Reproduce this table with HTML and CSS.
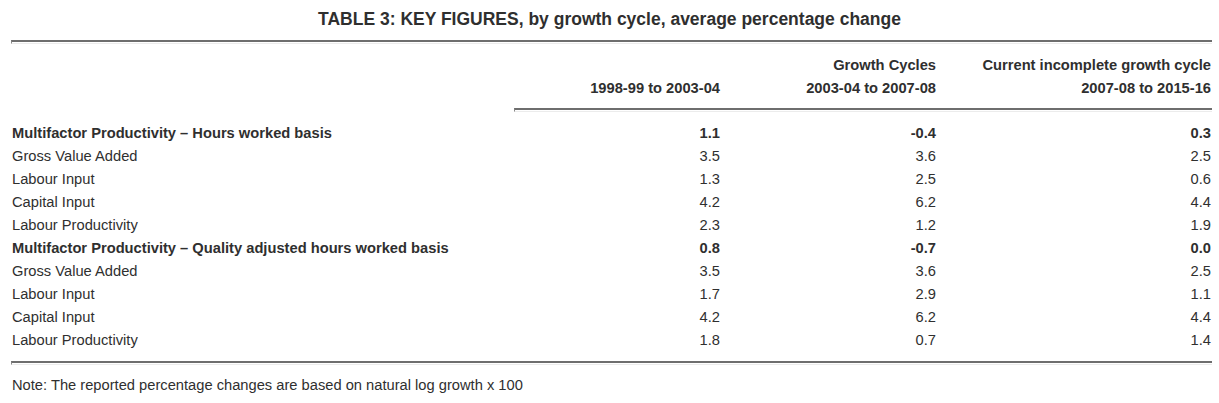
FILE: index.html
```html
<!DOCTYPE html>
<html>
<head>
<meta charset="utf-8">
<link rel="stylesheet" href="styles.css">
</head>
<body>
<div class="page">
  <h1 class="title">TABLE 3: KEY FIGURES, by growth cycle, average percentage change</h1>
  <div class="rule"></div>
  <div class="head">
    <div class="row">
      <div></div><div class="num"></div><div class="num">Growth Cycles</div><div class="num">Current incomplete growth cycle</div>
    </div>
    <div class="row">
      <div></div><div class="num">1998-99 to 2003-04</div><div class="num">2003-04 to 2007-08</div><div class="num">2007-08 to 2015-16</div>
    </div>
  </div>
  <div class="rule rule-sub"></div>
  <div class="body">
    <div class="row bold"><div>Multifactor Productivity – Hours worked basis</div><div class="num">1.1</div><div class="num">-0.4</div><div class="num">0.3</div></div>
    <div class="row"><div>Gross Value Added</div><div class="num">3.5</div><div class="num">3.6</div><div class="num">2.5</div></div>
    <div class="row"><div>Labour Input</div><div class="num">1.3</div><div class="num">2.5</div><div class="num">0.6</div></div>
    <div class="row"><div>Capital Input</div><div class="num">4.2</div><div class="num">6.2</div><div class="num">4.4</div></div>
    <div class="row"><div>Labour Productivity</div><div class="num">2.3</div><div class="num">1.2</div><div class="num">1.9</div></div>
    <div class="row bold"><div>Multifactor Productivity – Quality adjusted hours worked basis</div><div class="num">0.8</div><div class="num">-0.7</div><div class="num">0.0</div></div>
    <div class="row"><div>Gross Value Added</div><div class="num">3.5</div><div class="num">3.6</div><div class="num">2.5</div></div>
    <div class="row"><div>Labour Input</div><div class="num">1.7</div><div class="num">2.9</div><div class="num">1.1</div></div>
    <div class="row"><div>Capital Input</div><div class="num">4.2</div><div class="num">6.2</div><div class="num">4.4</div></div>
    <div class="row"><div>Labour Productivity</div><div class="num">1.8</div><div class="num">0.7</div><div class="num">1.4</div></div>
  </div>
  <div class="rule rule-bottom"></div>
  <p class="note">Note: The reported percentage changes are based on natural log growth x 100</p>
</div>
</body>
</html>
```
FILE: styles.css
```css
html, body {
  margin: 0;
  padding: 0;
  background: #ffffff;
}
.page {
  width: 1201px;
  margin-left: 11px;
  font-family: "Liberation Sans", Arial, sans-serif;
  color: #2f2f2f;
  font-size: 14.7px;
}
.title {
  margin: 0 0 0 -11px;
  width: 1219px;
  text-align: center;
  font-size: 17.5px;
  font-weight: bold;
  line-height: 39px;
  height: 40px;
}
.rule {
  height: 1px;
  border-top: 2px solid #6e6e6e;
  border-left: 1px solid #8a8a8a;
  border-bottom: 1px solid #ececec;
}
.head {
  padding-top: 10px;
  font-weight: bold;
}
.row {
  display: grid;
  grid-template-columns: 503px 206px 216px 275px;
  height: 23px;
  line-height: 23px;
  white-space: nowrap;
}
.row > div:first-child {
  padding-left: 1px;
}
.num {
  text-align: right;
}
.bold {
  font-weight: bold;
}
.rule-sub {
  margin-left: 503px;
  margin-top: 8px;
}
.body {
  padding-top: 10px;
}
.rule-bottom {
  margin-top: 9px;
}
.note {
  margin: 0;
  padding-left: 1px;
  line-height: 23px;
  padding-top: 9px;
}
```
